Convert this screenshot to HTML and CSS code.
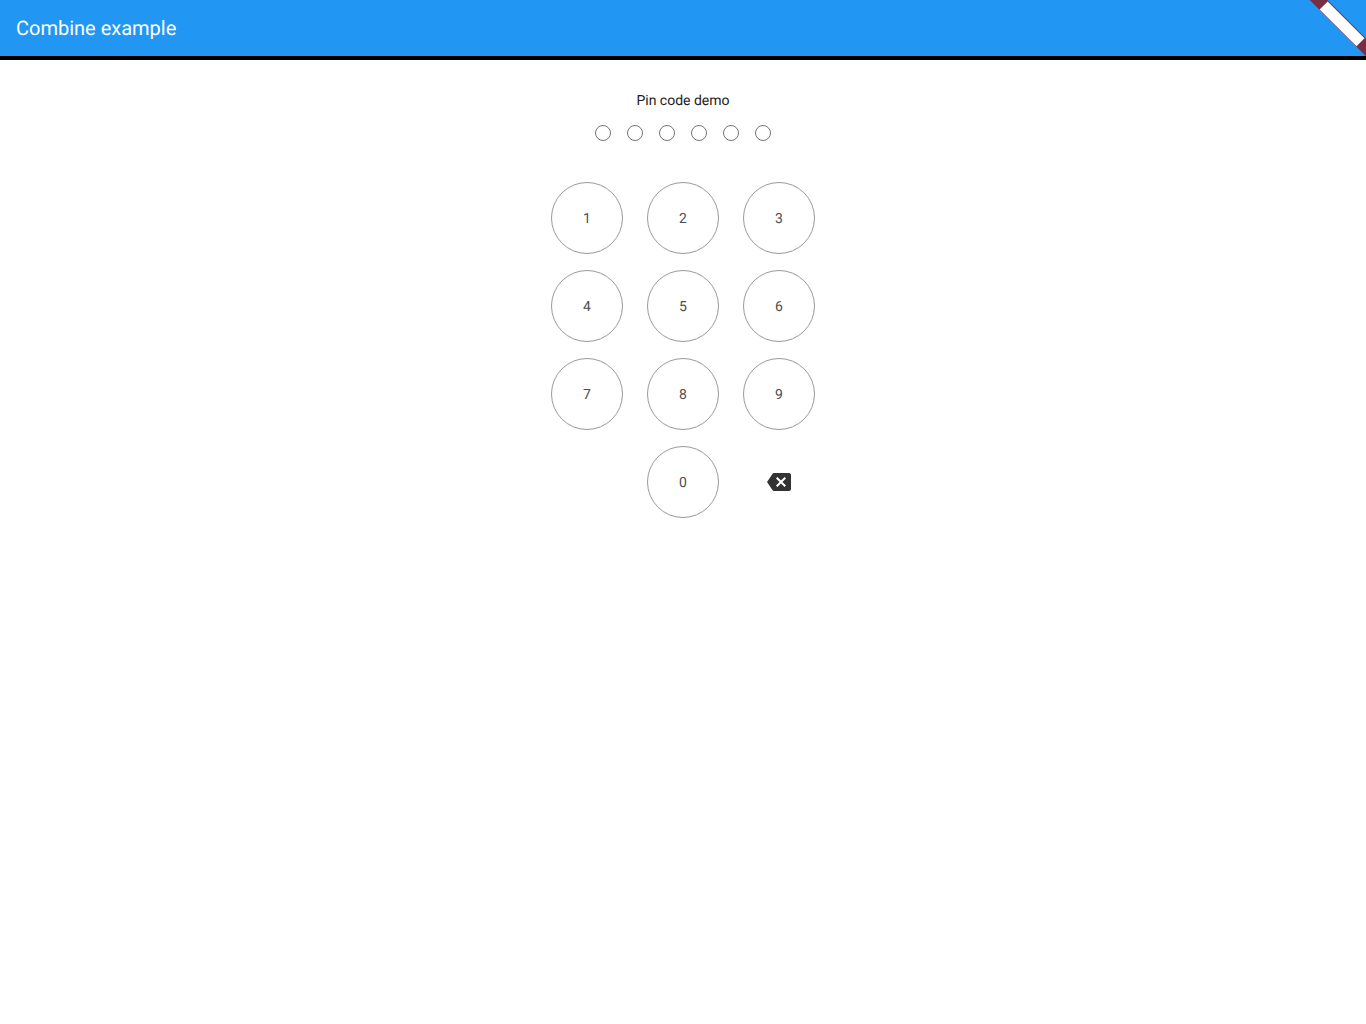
FILE: index.html
```html
<!DOCTYPE html>
<html lang="en">
<head>
<meta charset="utf-8">
<title>Combine example</title>
<link rel="stylesheet" href="styles.css">
</head>
<body>
<header class="app-bar">
  <h1 class="app-title">Combine example</h1>
  <svg class="ribbon" width="60" height="56" viewBox="0 0 60 56" aria-hidden="true">
    <path fill="#782f41" d="M3.7 0H21.5L60 38.5V56.3Z"/>
    <path fill="#fff" d="M13.6 9.4L21.7 1.4L58.5 38.2L50.5 46.2Z"/>
  </svg>
</header>
<main class="pin-screen">
  <p class="caption">Pin code demo</p>
  <div class="dots">
    <span class="dot"></span><span class="dot"></span><span class="dot"></span><span class="dot"></span><span class="dot"></span><span class="dot"></span>
  </div>
  <div class="keypad">
    <button class="key">1</button>
    <button class="key">2</button>
    <button class="key">3</button>
    <button class="key">4</button>
    <button class="key">5</button>
    <button class="key">6</button>
    <button class="key">7</button>
    <button class="key">8</button>
    <button class="key">9</button>
    <button class="key key-zero">0</button>
    <button class="key key-delete" aria-label="Delete">
      <svg width="24" height="24" viewBox="0 0 24 24"><path fill="#333" d="M22 3H7c-.69 0-1.23.35-1.59.88L0 12l5.41 8.11c.36.53.9.89 1.59.89h15c1.1 0 2-.9 2-2V5c0-1.1-.9-2-2-2zm-3 12.59L17.59 17 14 13.41 10.41 17 9 15.59 12.59 12 9 8.41 10.41 7 14 10.59 17.59 7 19 8.41 15.41 12 19 15.59z"/></svg>
    </button>
  </div>
</main>
</body>
</html>
```
FILE: styles.css
```css
body {
  margin: 0;
  background: #fff;
  color: #212121;
  font-family: Roboto, sans-serif;
  text-rendering: geometricPrecision;
}

.app-bar {
  position: relative;
  display: flex;
  align-items: center;
  height: 56px;
  padding: 0 16px;
  background: #2196f3;
  border-bottom: 4px solid #000;
}

.app-title {
  margin: 0;
  color: #fff;
  font-size: 20px;
  font-weight: 400;
  line-height: 24px;
}

.ribbon {
  position: absolute;
  top: 0;
  right: 0;
}

.pin-screen {
  display: flex;
  flex-direction: column;
  align-items: center;
  padding-top: 33px;
}

.caption {
  margin: 0;
  font-size: 14px;
  line-height: 17px;
}

.dots {
  display: flex;
  gap: 16px;
  margin-top: 15px;
}

.dot {
  box-sizing: border-box;
  width: 16px;
  height: 16px;
  border: 1px solid #757575;
  border-radius: 50%;
}

.keypad {
  display: grid;
  grid-template-columns: repeat(3, 72px);
  gap: 16px 24px;
  margin-top: 41px;
}

.key {
  display: flex;
  align-items: center;
  justify-content: center;
  box-sizing: border-box;
  width: 72px;
  height: 72px;
  padding: 2px 0 0;
  border: 1px solid #999;
  border-radius: 50%;
  background: none;
  color: #4d4d4d;
  font: 400 14px/16px Roboto, sans-serif;
  text-rendering: geometricPrecision;
}

.key-zero {
  grid-column: 2;
}

.key-delete {
  padding: 0;
  border-color: transparent;
}
```
